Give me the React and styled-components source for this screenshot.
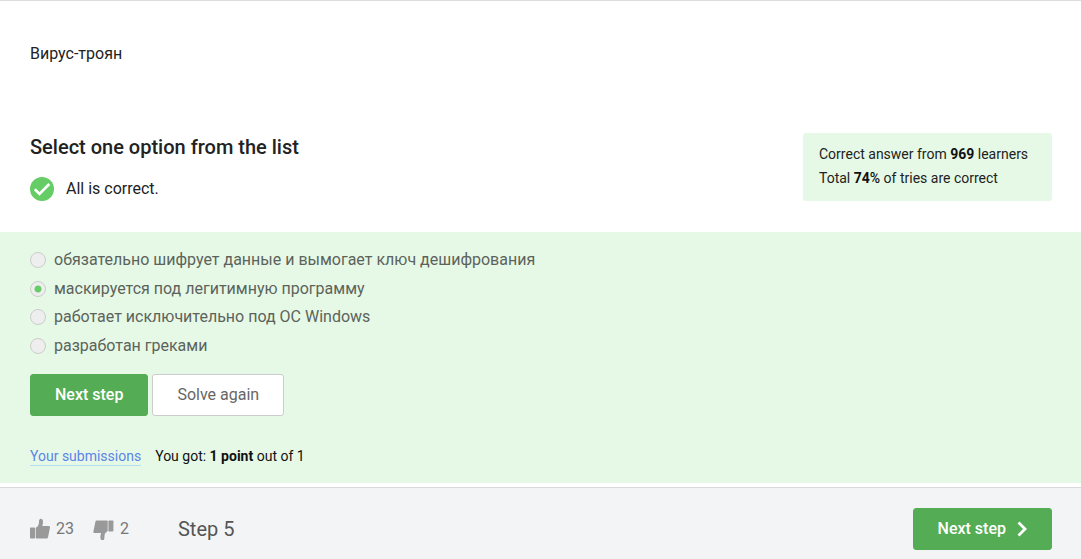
import React, { useState } from "react";
import styled, { createGlobalStyle } from "styled-components";

const GlobalStyle = createGlobalStyle`
  *, *::before, *::after { box-sizing: border-box; }
  body {
    margin: 0;
    background: #fff;
    color: #222;
    font: 400 16px/24px Roboto, "Open Sans", sans-serif;
  }
`;

const Page = styled.main`
  border-top: 1px solid #ddd;
`;

const Statement = styled.p`
  margin: 0;
  padding: 41px 30px 0;
`;

const Header = styled.header`
  display: flex;
  justify-content: space-between;
  align-items: flex-start;
  padding: 67px 29px 30px 30px;
`;

const Title = styled.h2`
  margin: 0;
  font-size: 20px;
  font-weight: 500;
  line-height: 28px;
`;

const Verdict = styled.div`
  display: flex;
  align-items: center;
  gap: 12px;
  margin-top: 15px;
  line-height: 26px;
`;

const Stats = styled.div`
  min-width: 249px;
  padding: 9px 16px 11px;
  border-radius: 3px;
  background: #e6f9e6;
  font-size: 14px;
  line-height: 24px;
`;

const Strong = styled.b`
  font-weight: ${(p) => (p.$medium ? 500 : 700)};
  color: #111;
`;

const Quiz = styled.form`
  padding: 14px 30px 15px;
  background: #e6f9e6;
`;

const Options = styled.fieldset`
  display: grid;
  grid-template-rows: repeat(4, 1fr);
  height: 114px;
  margin: 0;
  padding: 0;
  border: 0;
`;

const Option = styled.label`
  display: flex;
  align-items: center;
  gap: 8px;
  color: #5c635c;
`;

const Radio = styled.input`
  appearance: none;
  flex: none;
  width: 16px;
  height: 16px;
  margin: 0;
  border: 1px solid #ccc;
  border-radius: 50%;
  background: #eee;
  &:checked {
    background: radial-gradient(circle, #66cc66 3px, #eee 4px);
  }
`;

const Actions = styled.div`
  display: flex;
  gap: 4px;
  margin-top: 14px;
`;

const Button = styled.button`
  display: flex;
  align-items: center;
  gap: 11px;
  height: 42px;
  padding: 0 24px;
  border: 1px solid ${(p) => (p.$primary ? "#54ad54" : "#ccc")};
  border-radius: 3px;
  background: ${(p) => (p.$primary ? "#54ad54" : "#fff")};
  color: ${(p) => (p.$primary ? "#fff" : "#666")};
  font: inherit;
  font-weight: ${(p) => (p.$primary ? 500 : 400)};
  cursor: pointer;
`;

const Result = styled.div`
  display: flex;
  align-items: baseline;
  gap: 14px;
  margin-top: 28px;
  font-size: 14px;
  line-height: 24px;
  color: #111;
`;

const SubmissionsLink = styled.a`
  border-bottom: 1px solid #b3dff0;
  color: #5b84e8;
  line-height: 17px;
  text-decoration: none;
`;

const Footer = styled.footer`
  display: flex;
  align-items: center;
  margin-top: 4px;
  padding: 20px 29px 9px 30px;
  border-top: 1px solid #d8dadd;
  background: #f2f4f6;
`;

const Vote = styled.button`
  display: flex;
  align-items: center;
  gap: 6px;
  margin-right: 19px;
  padding: 0;
  border: 0;
  background: none;
  color: #777;
  font: inherit;
  line-height: 26px;
  cursor: pointer;
`;

const StepName = styled.span`
  margin: 0 auto 0 30px;
  color: #555;
  font-size: 20px;
  line-height: 28px;
`;

const CheckIcon = () => (
  <svg width="24" height="24" viewBox="0 0 24 24" aria-hidden="true">
    <circle cx="12" cy="12" r="12" fill="#66cc66" />
    <path d="M4.8 12.3l4.7 4.6L19.3 7" fill="none" stroke="#fff" strokeWidth="2.6" />
  </svg>
);

const thumbShapes = (
  <>
    <rect x="0" y="9.5" width="5" height="11" rx="0.8" />
    <path d="M5.700 10.400c0-.6.3-.9.8-1.200C8.600 8 9 6 9 3.500C9 1.500 9.700.7 10.900.7c1.500 0 2.100 1.300 2.100 3.100 0 1.700-.4 2.900-.7 4.200h6.500c.9 0 1.400.5 1.200 1.400l-2 9.800c-.2.900-.7 1.300-1.500 1.300H6.700c-.6 0-1-.4-1-1z" />
  </>
);

const ThumbUp = () => (
  <svg width="20" height="22" viewBox="0 0 20 22" fill="#999" aria-hidden="true">
    {thumbShapes}
  </svg>
);

const ThumbDown = () => (
  <svg width="21" height="22" viewBox="0 0 21 22" fill="#999" aria-hidden="true">
    <g transform="rotate(180 10.2 11.500)">{thumbShapes}</g>
  </svg>
);

const Chevron = () => (
  <svg width="10" height="16" viewBox="0 0 10 16" aria-hidden="true">
    <path d="M1.500 1.500L8 8l-6.500 6.500" fill="none" stroke="#fff" strokeWidth="2.800" />
  </svg>
);

const answers = [
  "обязательно шифрует данные и вымогает ключ дешифрования",
  "маскируется под легитимную программу",
  "работает исключительно под ОС Windows",
  "разработан греками",
];

export default function App() {
  const [selected, setSelected] = useState(1);
  return (
    <Page>
      <GlobalStyle />
      <Statement>Вирус-троян</Statement>
      <Header>
        <div>
          <Title>Select one option from the list</Title>
          <Verdict>
            <CheckIcon />
            <span>All is correct.</span>
          </Verdict>
        </div>
        <Stats>
          <div>Correct answer from <Strong>969</Strong> learners</div>
          <div>Total <Strong>74</Strong><Strong $medium>%</Strong> of tries are correct</div>
        </Stats>
      </Header>
      <Quiz onSubmit={(e) => e.preventDefault()}>
        <Options aria-label="Answers">
          {answers.map((text, i) => (
            <Option key={text}>
              <Radio
                type="radio"
                name="answer"
                checked={selected === i}
                onChange={() => setSelected(i)}
              />
              {text}
            </Option>
          ))}
        </Options>
        <Actions>
          <Button type="submit" $primary>Next step</Button>
          <Button type="button">Solve again</Button>
        </Actions>
        <Result>
          <SubmissionsLink href="#submissions">Your submissions</SubmissionsLink>
          <span>You got: <Strong>1 point</Strong> out of 1</span>
        </Result>
      </Quiz>
      <Footer>
        <Vote type="button" aria-label="Like"><ThumbUp />23</Vote>
        <Vote type="button" aria-label="Dislike"><ThumbDown />2</Vote>
        <StepName>Step 5</StepName>
        <Button type="button" $primary>Next step<Chevron /></Button>
      </Footer>
    </Page>
  );
}
